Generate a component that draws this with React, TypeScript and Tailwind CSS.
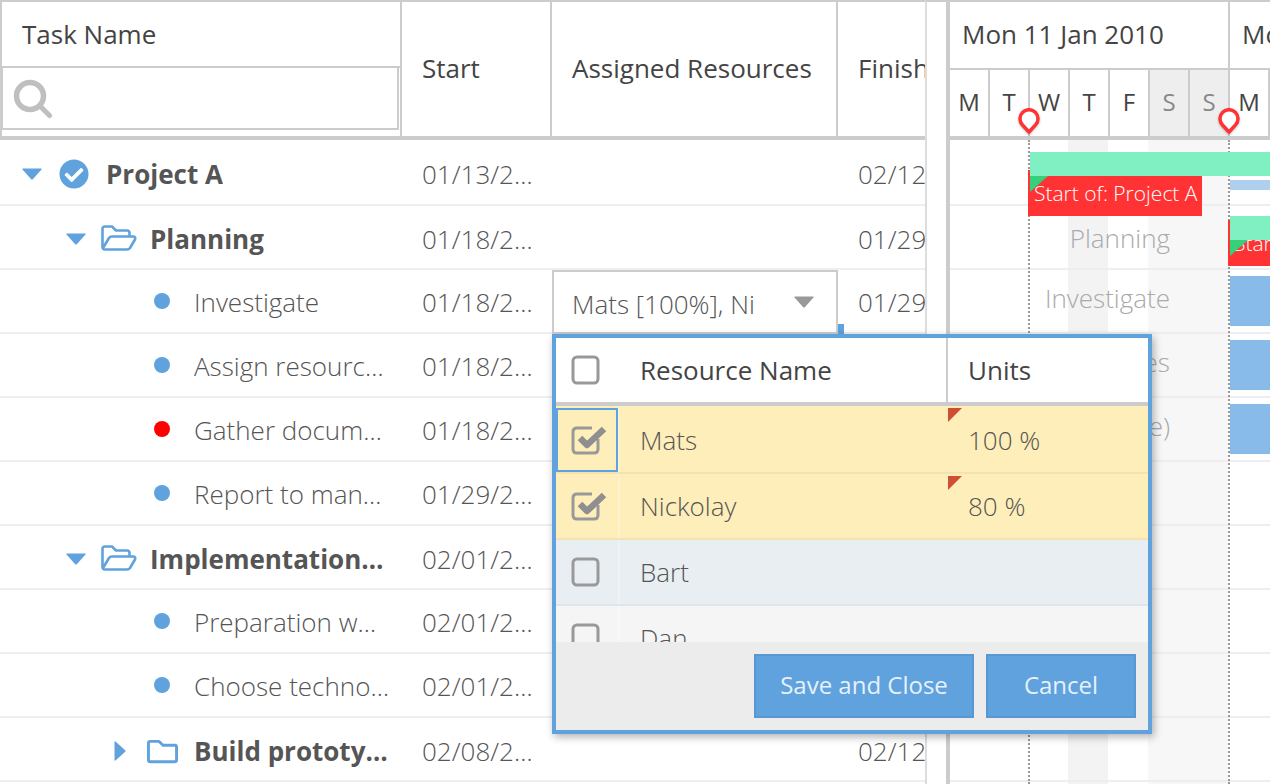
import React from 'react';
import { FaCheckCircle, FaRegFolder } from 'react-icons/fa';

type TaskRow = {
  name: string;
  start: string;
  finish: string;
  kind: 'project' | 'open' | 'closed' | 'leaf';
  dot?: string;
};

const rows: TaskRow[] = [
  { name: 'Project A', start: '01/13/2010', finish: '02/12/2010', kind: 'project' },
  { name: 'Planning', start: '01/18/2010', finish: '01/29/2010', kind: 'open' },
  { name: 'Investigate', start: '01/18/2010', finish: '01/29/2010', kind: 'leaf', dot: 'bg-[#5fa2dd]' },
  { name: 'Assign resources', start: '01/18/2010', finish: '01/29/2010', kind: 'leaf', dot: 'bg-[#5fa2dd]' },
  { name: 'Gather documents', start: '01/18/2010', finish: '01/29/2010', kind: 'leaf', dot: 'bg-[#ff0000]' },
  { name: 'Report to management', start: '01/29/2010', finish: '01/29/2010', kind: 'leaf', dot: 'bg-[#5fa2dd]' },
  { name: 'Implementation Phase', start: '02/01/2010', finish: '02/12/2010', kind: 'open' },
  { name: 'Preparation work', start: '02/01/2010', finish: '02/05/2010', kind: 'leaf', dot: 'bg-[#5fa2dd]' },
  { name: 'Choose technology', start: '02/01/2010', finish: '02/05/2010', kind: 'leaf', dot: 'bg-[#5fa2dd]' },
  { name: 'Build prototype', start: '02/08/2010', finish: '02/12/2010', kind: 'closed' },
];

const days = [
  { label: 'M', weekend: false },
  { label: 'T', weekend: false },
  { label: 'W', weekend: false },
  { label: 'T', weekend: false },
  { label: 'F', weekend: false },
  { label: 'S', weekend: true },
  { label: 'S', weekend: true },
  { label: 'M', weekend: false },
];

const DownArrow = () => (
  <svg width="20" height="12" viewBox="0 0 20 12" className="shrink-0 fill-[#5fa2dd]">
    <path d="M1 0.5 H19 Q20 0.5 19.5 1.5 L10.8 11.2 Q10 12 9.2 11.2 L0.5 1.5 Q0 0.5 1 0.5 Z" />
  </svg>
);

const RightArrow = () => (
  <svg width="12" height="20" viewBox="0 0 12 20" className="shrink-0 fill-[#5fa2dd]">
    <path d="M0.5 1 V19 Q0.5 20 1.5 19.5 L11.2 10.8 Q12 10 11.2 9.2 L1.5 0.5 Q0.5 0 0.5 1 Z" />
  </svg>
);

const OpenFolder = () => (
  <svg
    width="36"
    height="26"
    viewBox="0 0 36 26"
    fill="none"
    stroke="#5fa2dd"
    strokeWidth="2.6"
    strokeLinejoin="round"
    className="shrink-0 ml-[15px] mr-[13px] -mt-[3px]"
  >
    <path d="M4 24.5 Q1.5 24.5 1.5 22 V4 Q1.5 1.5 4 1.5 H11 L15 5.5 H26 Q28.5 5.5 28.5 8 V11" />
    <path d="M4 24.5 H26 Q28 24.5 29 23 L34 14.5 Q35 12 32.5 11.5 H11 Q9 11.5 8 13 L2 23" />
  </svg>
);

const TreeCell = ({ row }: { row: TaskRow }) => {
  if (row.kind === 'project') {
    return (
      <div className="flex items-center pl-[22px]">
        <DownArrow />
        <FaCheckCircle className="ml-[17px] mr-[17px] text-[30px] text-[#5fa2dd] shrink-0" />
        <span className="truncate font-bold">{row.name}</span>
      </div>
    );
  }
  if (row.kind === 'open') {
    return (
      <div className="flex items-center pl-[66px] pr-[14px]">
        <DownArrow />
        <OpenFolder />
        <span className="truncate font-bold">{row.name}</span>
      </div>
    );
  }
  if (row.kind === 'closed') {
    return (
      <div className="flex items-center pl-[114px] pr-[10px]">
        <RightArrow />
        <FaRegFolder className="ml-[21px] mr-[16px] text-[31px] text-[#5fa2dd] shrink-0" />
        <span className="truncate font-bold">{row.name}</span>
      </div>
    );
  }
  return (
    <div className="flex items-center pl-[154px] pr-[10px]">
      <span className={`w-[16px] h-[16px] rounded-full shrink-0 mr-[24px] -mt-[2px] ${row.dot}`} />
      <span className="truncate font-light">{row.name}</span>
    </div>
  );
};

const CheckBox = ({ checked }: { checked?: boolean }) => (
  <svg width="36" height="32" viewBox="0 0 36 32" className="shrink-0">
    {checked ? (
      <path
        d="M27 15 V25 Q27 29 23 29 H6 Q2 29 2 25 V8 Q2 4 6 4 H21"
        fill="none"
        stroke="#999"
        strokeWidth="3"
      />
    ) : (
      <rect x="2" y="3" width="25" height="26" rx="4" fill="none" stroke="#999" strokeWidth="3" />
    )}
    {checked && (
      <path d="M9 14 L16 21 L33 5" fill="none" stroke="#8f8f8f" strokeWidth="6.5" strokeLinejoin="round" />
    )}
  </svg>
);

const Pin = ({ className }: { className: string }) => (
  <svg
    width="24"
    height="28"
    viewBox="0 0 24 28"
    className={`absolute drop-shadow-[0_1px_1px_rgba(0,0,0,0.25)] ${className}`}
  >
    <path
      d="M12 24 L5.3 16.7 A9 9 0 1 1 18.7 16.7 Z"
      fill="#fff"
      stroke="#ff3333"
      strokeWidth="3.5"
      strokeLinejoin="round"
    />
  </svg>
);

const EventBar = ({ className, text, cornerTop }: { className: string; text: string; cornerTop: string }) => (
  <div className={`absolute bg-[#ff3333] overflow-hidden ${className}`}>
    <span className="absolute left-[6px] top-[8px] text-[21px] leading-[30px] font-light text-white whitespace-nowrap">
      {text}
    </span>
    <svg width="19" height="16" viewBox="0 0 19 16" className={`absolute left-[2px] ${cornerTop}`}>
      <path d="M0 0 H18 L0 16 Z" fill="#34d17a" />
    </svg>
  </div>
);

const ResourceRow = ({
  name,
  units,
  checked,
  focused,
  className,
}: {
  name: string;
  units?: string;
  checked?: boolean;
  focused?: boolean;
  className: string;
}) => (
  <div className={`relative flex shrink-0 border-b-2 text-[#555] font-light ${focused ? 'pt-[2px]' : ''} ${className}`}>
    <div className="relative w-[62px] shrink-0 flex items-center pl-[15px]">
      <CheckBox checked={checked} />
      {focused && <div className="absolute left-0 right-0 top-0 bottom-0 border-2 border-[#5fa2dd]" />}
    </div>
    <div className="w-[2px] shrink-0 bg-white/30" />
    <div className="w-[326px] shrink-0 flex items-center pl-[20px]">{name}</div>
    <div className="relative flex-1 flex items-center pl-[22px]">
      {units}
      {units && (
        <svg
          width="14"
          height="14"
          viewBox="0 0 14 14"
          className={`absolute left-[2px] ${focused ? 'top-0' : 'top-[2px]'}`}
        >
          <path d="M0 0 H14 L0 14 Z" fill="#cf4f33" />
        </svg>
      )}
    </div>
  </div>
);

export default function App() {
  return (
    <div className="relative w-[1270px] h-[784px] overflow-hidden bg-white flex text-[26px] leading-[36px] text-[#555] font-['Open_Sans',sans-serif]">
      {/* locked grid */}
      <div className="w-[925px] shrink-0 overflow-hidden flex flex-col">
        <div className="w-[1100px] h-[140px] shrink-0 flex border-t-2 border-l-2 border-b-4 border-[#ccc] text-[#444]">
          <div className="w-[400px] shrink-0 flex flex-col border-r-2 border-[#ccc]">
            <div className="h-[66px] shrink-0 pl-[20px] flex items-center border-b-2 border-[#ccc]">Task Name</div>
            <div className="h-[62px] shrink-0 border-l border-r-2 border-b-2 border-[#ccc] mr-px flex items-center pl-[10px] pt-[2px]">
              <svg width="40" height="40" viewBox="0 0 40 40" fill="none" stroke="#bfbfbf">
                <circle cx="17" cy="17" r="13.5" strokeWidth="5.5" />
                <path d="M27 27 L36.5 36.5" strokeWidth="5" strokeLinecap="round" />
              </svg>
            </div>
          </div>
          <div className="w-[150px] shrink-0 pl-[20px] pb-[2px] flex items-center border-r-2 border-[#ccc]">Start</div>
          <div className="w-[286px] shrink-0 pl-[20px] pb-[2px] flex items-center border-r-2 border-[#ccc] whitespace-nowrap">
            Assigned Resources
          </div>
          <div className="flex-1 pl-[20px] pb-[2px] flex items-center">Finish</div>
        </div>
        <div className="flex flex-col">
          {rows.map((row, i) => (
            <div
              key={row.name}
              className={`w-[1100px] flex items-center shrink-0 border-b-2 border-[#eee] ${i === 0 ? 'h-[66px]' : 'h-[64px]'} ${row.kind === 'leaf' ? 'pt-[2px]' : 'pt-[4px]'}`}
            >
              <div className="w-[400px] shrink-0 overflow-hidden">
                <TreeCell row={row} />
              </div>
              <div className="w-[152px] shrink-0 pl-[22px] pr-[18px] truncate font-light">{row.start}</div>
              <div className="w-[286px] shrink-0" />
              <div className="flex-1 pl-[20px] font-light">{row.finish}</div>
            </div>
          ))}
        </div>
      </div>

      {/* splitter */}
      <div className="w-[25px] shrink-0 border-l-2 border-r-4 border-l-[#ddd] border-r-[#ccc] border-t-2 border-t-[#ccc]" />

      {/* schedule */}
      <div className="relative flex-1 overflow-hidden flex flex-col">
        <div className="h-[140px] shrink-0 flex flex-col w-[400px] border-t-2 border-b-4 border-[#ccc] text-[#444]">
          <div className="h-[68px] shrink-0 flex border-b-2 border-[#ccc] whitespace-nowrap">
            <div className="w-[280px] shrink-0 pl-[12px] pb-[2px] flex items-center border-r-2 border-[#ccc]">Mon 11 Jan 2010</div>
            <div className="flex-1 pl-[12px] pb-[2px] flex items-center">Mon 18 Jan 2010</div>
          </div>
          <div className="flex-1 flex text-[24px]">
            {days.map((day, i) => (
              <div
                key={i}
                className={`w-[40px] shrink-0 flex justify-center pt-[14px] border-r-2 border-[#ccc] ${day.weekend ? 'bg-[#eee] text-[#888]' : ''}`}
              >
                {day.label}
              </div>
            ))}
          </div>
        </div>

        <div className="relative flex-1">
          <div className="absolute left-[118px] top-0 bottom-0 w-[40px] bg-[#f3f3f3]" />
          <div className="absolute left-[198px] top-0 bottom-0 w-[80px] bg-[#f7f7f7]" />
          <div className="relative flex flex-col">
            {rows.map((row, i) => (
              <div
                key={row.name}
                className={`shrink-0 border-b-2 border-[#eee] ${i === 0 ? 'h-[66px]' : 'h-[64px]'}`}
              />
            ))}
          </div>

          <div className="absolute left-[78px] top-0 bottom-0 border-l-2 border-dotted border-[#999]" />
          <div className="absolute left-[278px] top-0 bottom-0 border-l-2 border-dotted border-[#999]" />

          <span className="absolute right-[100px] top-[80px] font-light text-[#aaa]">Planning</span>
          <span className="absolute right-[100px] top-[140px] font-light text-[#aaa]">Investigate</span>
          <span className="absolute right-[100px] top-[204px] font-light text-[#aaa]">Assign resources</span>
          <span className="absolute right-[100px] top-[268px] font-light text-[#aaa] whitespace-nowrap">Gather (the)</span>

          <EventBar className="left-[78px] top-[30px] w-[174px] h-[46px]" text="Start of: Project A" cornerTop="top-[6px]" />
          <EventBar className="left-[278px] top-[80px] w-[174px] h-[46px]" text="Start of: Planning" cornerTop="top-[20px]" />
          <div className="absolute left-[80px] top-[12px] w-[360px] h-[24px] bg-[#80efc1]" />
          <div className="absolute left-[280px] top-[76px] w-[100px] h-[24px] bg-[#80efc1]" />
          <div className="absolute left-[280px] top-[40px] w-[100px] h-[10px] bg-[#aed0ee]" />
          <div className="absolute left-[280px] top-[136px] w-[100px] h-[50px] bg-[#88bbea]" />
          <div className="absolute left-[280px] top-[200px] w-[100px] h-[50px] bg-[#88bbea]" />
          <div className="absolute left-[280px] top-[264px] w-[100px] h-[50px] bg-[#88bbea]" />
        </div>

        <Pin className="left-[67px] top-[108px]" />
        <Pin className="left-[267px] top-[108px]" />
      </div>

      {/* cell editor */}
      <div className="absolute left-[552px] top-[270px] w-[286px] h-[64px] bg-white border-2 border-[#ccc] flex items-center pl-[18px] pr-[22px] justify-between font-light">
        <span className="pt-[4px]">Mats [100%], Ni</span>
        <svg width="20" height="12" viewBox="0 0 20 12" className="fill-[#999]">
          <path d="M1 0.5 H19 Q20 0.5 19.5 1.5 L10.8 11.2 Q10 12 9.2 11.2 L0.5 1.5 Q0 0.5 1 0.5 Z" />
        </svg>
      </div>
      <div className="absolute left-[838px] top-[324px] w-[6px] h-[10px] bg-[#5fa2dd]" />

      {/* resource picker */}
      <div className="absolute left-[552px] top-[334px] w-[600px] h-[400px] border-4 border-[#5fa2dd] bg-[#ececec] flex flex-col shadow-[2px_3px_8px_rgba(0,0,0,0.3)]">
        <div className="h-[68px] shrink-0 flex bg-white border-b-4 border-[#ccc] text-[#444]">
          <div className="w-[64px] shrink-0 flex items-center pl-[15px]">
            <CheckBox />
          </div>
          <div className="w-[328px] shrink-0 flex items-center pl-[20px] border-r-2 border-[#ccc]">Resource Name</div>
          <div className="flex-1 flex items-center pl-[20px]">Units</div>
        </div>
        <div className="h-[236px] shrink-0 overflow-hidden flex flex-col">
          <ResourceRow name="Mats" units="100 %" checked focused className="h-[68px] bg-[#feeeb9] border-[#f4e3ad]" />
          <ResourceRow name="Nickolay" units="80 %" checked className="h-[66px] bg-[#feeeb9] border-[#f4e3ad]" />
          <ResourceRow name="Bart" className="h-[66px] bg-[#e9eef2] border-[#e0e5e9]" />
          <ResourceRow name="Dan" className="h-[66px] bg-[#f5f5f5] border-[#eee]" />
        </div>
        <div className="flex-1 flex justify-end items-start gap-[12px] pt-[12px] pr-[12px] text-[24px] font-normal text-[#e6f1fb]">
          <button className="w-[220px] h-[64px] pb-[2px] bg-[#5fa2dd] border-2 border-[#5897d0]">Save and Close</button>
          <button className="w-[150px] h-[64px] pb-[2px] bg-[#5fa2dd] border-2 border-[#5897d0]">Cancel</button>
        </div>
      </div>
    </div>
  );
}
